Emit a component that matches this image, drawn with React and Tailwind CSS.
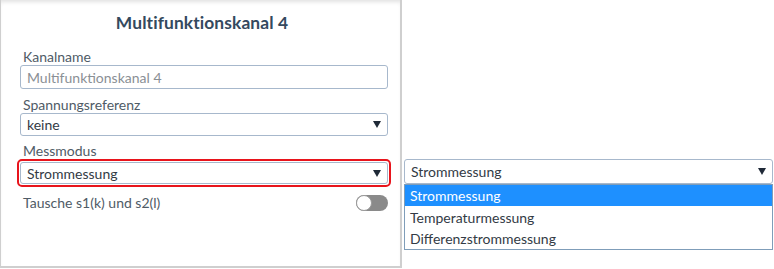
import React from "react";

function Caret() {
  return (
    <svg width="8" height="7" viewBox="0 0 8 7" className="shrink-0">
      <path d="M0 0 H8 L4 7 Z" fill="#1f2937" />
    </svg>
  );
}

function SelectBox({ value, className = "h-[24px]" }) {
  return (
    <div className={`flex items-center justify-between border border-[#a7b8cc] rounded-[3px] bg-white pl-[6px] pr-[6px] text-[14px] text-[#333b45] ${className}`}>
      <span>{value}</span>
      <Caret />
    </div>
  );
}

export default function App() {
  const font = { fontFamily: "Lato, 'Liberation Sans', sans-serif" };
  return (
    <div className="w-[774px] h-[269px] bg-white flex items-start" style={font}>
      <div className="w-[402px] h-[268px] bg-white border-r-2 border-b-2 border-l border-[#cfcfcf] shadow-[inset_0_4px_4px_-2px_rgba(0,0,0,0.12)] flex flex-col pl-[19px] pr-[12px]">
        <div className="text-center text-[17.4px] font-bold text-[#34495e] pt-[10px] h-[48px] tracking-[0.1px] pr-[4px]">
          Multifunktionskanal 4
        </div>
        <div className="text-[14px] text-[#4f5b66] pl-[3px] leading-[17px]">Kanalname</div>
        <div className="h-[24px] border border-[#a7b8cc] rounded-[3px] flex items-center pl-[6px] text-[14px] text-[#8a8f95]">
          Multifunktionskanal 4
        </div>
        <div className="text-[14px] text-[#4f5b66] pl-[3px] leading-[17px] mt-[7px]">Spannungsreferenz</div>
        <SelectBox value="keine" className="h-[23px]" />
        <div className="text-[14px] text-[#4f5b66] pl-[3px] leading-[17px] mt-[6px]">Messmodus</div>
        <div className="mx-[-3px] p-[1px] border-2 border-[#e8141c] rounded-[5px]">
          <SelectBox value="Strommessung" className="h-[22px]" />
        </div>
        <div className="flex items-center justify-between mt-[5px] pl-[3px]">
          <span className="text-[14px] text-[#4f5b66]">Tausche s1(k) und s2(l)</span>
          <div className="w-[32px] h-[16px] rounded-full bg-[#8a8a8a] flex items-center">
            <div className="w-[16px] h-[16px] rounded-full bg-white border border-[#9a9a9a]" />
          </div>
        </div>
      </div>
      <div className="flex flex-col w-[369px] ml-[2px] mt-[159px]">
        <SelectBox value="Strommessung" className="h-[25px]" />
        <div className="border border-[#7f9db9] bg-white text-[14px] text-[#333b45] flex flex-col">
          <div className="h-[21px] bg-[#1e90ff] text-white flex items-center pl-[5px]">Strommessung</div>
          <div className="h-[22px] flex items-center pl-[5px]">Temperaturmessung</div>
          <div className="h-[21px] flex items-center pl-[5px]">Differenzstrommessung</div>
        </div>
      </div>
    </div>
  );
}
